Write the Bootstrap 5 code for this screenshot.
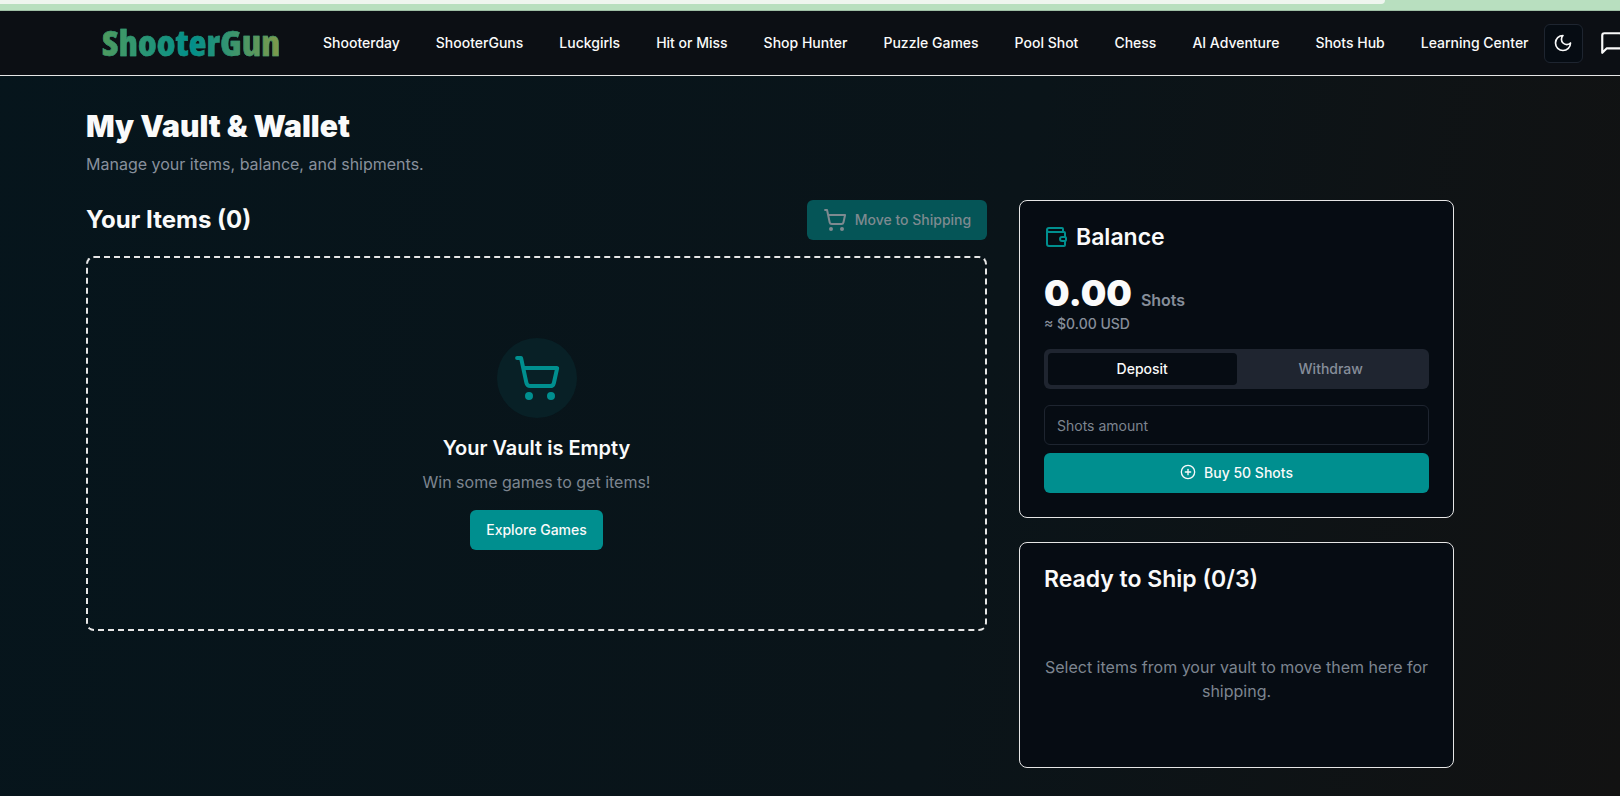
<!DOCTYPE html>
<html lang="en">

<head>
  <meta charset="UTF-8">
  <title>My Vault &amp; Wallet</title>
  <link href="https://cdn.jsdelivr.net/npm/bootstrap@5.3.2/dist/css/bootstrap.min.css" rel="stylesheet">
  <style>
    html, body { height: 100%; }
    body {
      font-family: Inter, "Liberation Sans", sans-serif;
      background: linear-gradient(100deg, #06151c 0%, #0a1419 60%, #121212 100%);
      color: #fafafa;
      overflow: hidden;
    }
    .browser-edge { height: 11px; background: #b8dfbf; border-bottom: 1px solid #9fbfa5; }
    .browser-tab { height: 4px; width: 1385px; background: #eef5ef; border-bottom-right-radius: 6px; }
    .top-nav {
      height: 65px; width: 1700px; background: #0c0f14; border-bottom: 1px solid #e6e6e6;
      padding-left: 102px;
    }
    .logo-wrap { width: 221px; flex: none; }
    .logo {
      display: inline-block; white-space: nowrap;
      font-family: "Open Sans", sans-serif; font-weight: 800; font-stretch: 75%; font-size: 36px; line-height: 1; letter-spacing: .3px;
      background: linear-gradient(90deg, #4f9a5e 0%, #008f8c 50%, #819a48 100%);
      -webkit-background-clip: text; background-clip: text; color: transparent;
      -webkit-text-stroke: .5px rgba(40, 150, 120, .8);
    }
    .nav-text { font-size: 14px; font-weight: 500; color: #fafafa; text-decoration: none; margin-right: 36px; padding-bottom: 2px; white-space: nowrap; }
    .icon-box {
      width: 39px; height: 39px; border: 1px solid #1e2530; border-radius: 6px; background: #060c13;
      margin-left: -1px; margin-right: 16px;
    }
    .page-body { padding: 32px 0 0 86px; width: 1454px; }
    .page-title { font-size: 30px; font-weight: 900; line-height: 36px; margin: 0 0 8px; }
    .page-sub { font-size: 16px; line-height: 24px; color: #88909c; margin: 0 0 24px; }
    .page-grid { display: grid; grid-template-columns: 901px 435px; gap: 32px; }
    .items-title { font-size: 24px; font-weight: 700; line-height: 32px; margin: 0; }
    .ship-btn {
      height: 40px; width: 180px; background: #055557; color: #7e8a90; border: 0; border-radius: 6px;
      font-size: 14px; font-weight: 500; padding: 0 0 1px;
    }
    .ship-btn:disabled { background: #055557; color: #7e8a90; opacity: 1; }
    .empty-box {
      height: 375px; margin-top: 16px; border: 2px dashed #e6e6e6; border-radius: 8px;
    }
    .empty-circle { width: 80px; height: 80px; border-radius: 50%; background: #082026; margin-bottom: 16px; }
    .empty-title { font-size: 20px; font-weight: 600; line-height: 28px; margin: 0 0 8px; }
    .empty-sub { font-size: 16px; line-height: 24px; color: #7d8590; margin: 0 0 16px; }
    .teal-btn {
      background: #008f8f; color: #fafafa; border: 0; border-radius: 6px; height: 40px;
      font-size: 14px; font-weight: 500;
    }
    .teal-btn:hover { background: #008f8f; color: #fafafa; }
    .buy-btn { padding-bottom: 8px; }
    .side-card { background: #060c13; border: 1px solid #e6e6e6; border-radius: 8px; padding: 24px; }
    .side-title { font-size: 23px; font-weight: 600; line-height: 24px; margin: 0; }
    .balance-num { font-size: 36px; font-weight: 900; line-height: 40px; }
    .balance-unit { font-size: 16px; font-weight: 600; color: #868e9a; margin-left: 9px; }
    .balance-usd { font-size: 14px; font-weight: 500; line-height: 19px; color: #868e9a; padding-top: 1px; }
    .tab-bar { background: #1f2530; border-radius: 6px; padding: 4px; height: 40px; margin-top: 16px; }
    .tab-item { flex: 1 1 0; font-size: 14px; font-weight: 500; color: #868e9a; border-radius: 4px; padding-bottom: 2px; }
    .tab-item.on { background: #060c13; color: #fafafa; }
    .amount-input.form-control {
      height: 40px; margin-top: 16px; background: #060c13; border: 1px solid #1e2530; border-radius: 6px;
      font-size: 14px; color: #fafafa; padding: 0 12px;
    }
    .amount-input.form-control::placeholder { color: #7d8590; }
    .ship-note { font-size: 16px; line-height: 24px; color: #7d8590; text-align: center; height: 128px; }
  </style>
</head>

<body>
  <div class="browser-edge"><div class="browser-tab"></div></div>

  <nav class="top-nav d-flex align-items-center">
    <div class="logo-wrap"><a class="logo text-decoration-none">ShooterGun</a></div>
    <a class="nav-text" href="#">Shooterday</a>
    <a class="nav-text" href="#">ShooterGuns</a>
    <a class="nav-text" href="#">Luckgirls</a>
    <a class="nav-text" href="#">Hit or Miss</a>
    <a class="nav-text" href="#">Shop Hunter</a>
    <a class="nav-text" href="#">Puzzle Games</a>
    <a class="nav-text" href="#">Pool Shot</a>
    <a class="nav-text" href="#">Chess</a>
    <a class="nav-text" href="#">AI Adventure</a>
    <a class="nav-text" href="#">Shots Hub</a>
    <a class="nav-text me-3" href="#">Learning Center</a>
    <div class="icon-box d-flex align-items-center justify-content-center">
      <svg width="20" height="20" viewBox="0 0 24 24" fill="none" stroke="#fafafa" stroke-width="2" stroke-linecap="round" stroke-linejoin="round"><path d="M12 3a6 6 0 0 0 9 9 9 9 0 1 1-9-9Z"/></svg>
    </div>
    <svg width="26" height="26" viewBox="0 0 24 24" fill="none" stroke="#fafafa" stroke-width="2" stroke-linecap="round" stroke-linejoin="round"><path d="M21 15a2 2 0 0 1-2 2H7l-4 4V5a2 2 0 0 1 2-2h14a2 2 0 0 1 2 2z"/></svg>
  </nav>

  <main class="page-body">
    <h1 class="page-title">My Vault &amp; Wallet</h1>
    <p class="page-sub">Manage your items, balance, and shipments.</p>

    <div class="page-grid">
      <section>
        <div class="d-flex justify-content-between align-items-center">
          <h2 class="items-title">Your Items (0)</h2>
          <button class="btn ship-btn d-flex align-items-center justify-content-center gap-2" disabled>
            <svg width="24" height="24" viewBox="0 0 24 24" fill="none" stroke="currentColor" stroke-width="2" stroke-linecap="round" stroke-linejoin="round"><circle cx="8" cy="21" r="1"/><circle cx="19" cy="21" r="1"/><path d="M2.05 2.05h2l2.66 12.42a2 2 0 0 0 2 1.58h9.78a2 2 0 0 0 1.95-1.57l1.65-7.43H5.12"/></svg>
            Move to Shipping
          </button>
        </div>
        <div class="empty-box d-flex flex-column align-items-center justify-content-center">
          <div class="empty-circle d-flex align-items-center justify-content-center">
            <svg width="48" height="48" viewBox="0 0 24 24" fill="none" stroke="#008f8f" stroke-width="2" stroke-linecap="round" stroke-linejoin="round"><circle cx="8" cy="21" r="1"/><circle cx="19" cy="21" r="1"/><path d="M2.05 2.05h2l2.66 12.42a2 2 0 0 0 2 1.58h9.78a2 2 0 0 0 1.95-1.57l1.65-7.43H5.12"/></svg>
          </div>
          <h3 class="empty-title">Your Vault is Empty</h3>
          <p class="empty-sub">Win some games to get items!</p>
          <button class="btn teal-btn px-3">Explore Games</button>
        </div>
      </section>

      <aside class="d-flex flex-column gap-4">
        <div class="side-card">
          <div class="d-flex align-items-center gap-2">
            <svg width="24" height="24" viewBox="0 0 24 24" fill="none" stroke="#008f8f" stroke-width="2" stroke-linecap="round" stroke-linejoin="round"><path d="M19 7V4a1 1 0 0 0-1-1H5a2 2 0 0 0 0 4h15a1 1 0 0 1 1 1v4h-3a2 2 0 0 0 0 4h3a1 1 0 0 0 1-1v-2a1 1 0 0 0-1-1"/><path d="M3 5v14a2 2 0 0 0 2 2h15a1 1 0 0 0 1-1v-4"/></svg>
            <h2 class="side-title">Balance</h2>
          </div>
          <div class="d-flex align-items-baseline mt-4">
            <span class="balance-num">0.00</span><span class="balance-unit">Shots</span>
          </div>
          <div class="balance-usd">≈ $0.00 USD</div>
          <div class="tab-bar d-flex">
            <div class="tab-item on d-flex align-items-center justify-content-center">Deposit</div>
            <div class="tab-item d-flex align-items-center justify-content-center">Withdraw</div>
          </div>
          <input type="text" class="form-control amount-input" placeholder="Shots amount">
          <button class="btn teal-btn buy-btn w-100 d-flex align-items-center justify-content-center gap-2 mt-2">
            <svg width="16" height="16" viewBox="0 0 24 24" fill="none" stroke="currentColor" stroke-width="2" stroke-linecap="round" stroke-linejoin="round"><circle cx="12" cy="12" r="10"/><path d="M8 12h8"/><path d="M12 8v8"/></svg>
            Buy 50 Shots
          </button>
        </div>

        <div class="side-card">
          <h2 class="side-title">Ready to Ship (0/3)</h2>
          <div class="ship-note d-flex align-items-center justify-content-center mt-4">Select items from your vault to move them here for shipping.</div>
        </div>
      </aside>
    </div>
  </main>

  <script src="https://cdn.jsdelivr.net/npm/bootstrap@5.3.2/dist/js/bootstrap.bundle.min.js"></script>
</body>

</html>
